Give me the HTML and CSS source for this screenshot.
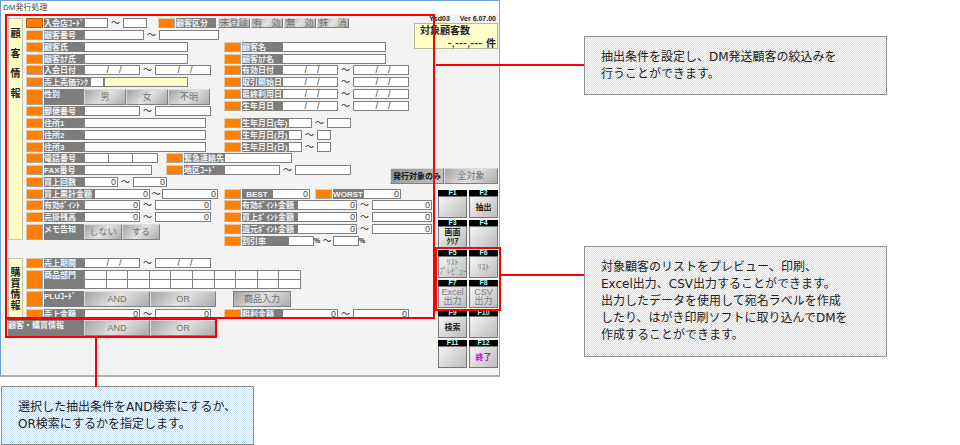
FILE: index.html
```html
<!DOCTYPE html>
<html lang="ja">
<head>
    <meta charset="UTF-8">
    <meta name="viewport" content="width=device-width, initial-scale=1.0">
    <title>DM発行処理</title>
    <link rel="stylesheet" href="styles.css">
</head>
<body>
<div class="page">
    <div class="col-main">
        <div class="window">
            <div class="titlebar">DM発行処理</div>
            <div class="window-body">
                <form class="form">
                    <div class="extract">

                        <!-- 顧客情報 -->
                        <section class="section">
                            <h2 class="side side-customer">顧客情報</h2>
                            <div class="fields">
                                <div class="group">
                                    <div class="row">
                                        <div class="field lead-s"><button type="button" class="mark focus"></button><label class="tag" for="shop1">入会店ｺｰﾄﾞ</label><input class="w24" id="shop1"><span class="tilde">～</span><input class="w24"></div>
                                        <div class="field"><button type="button" class="mark"></button><span class="tag">顧客区分</span><div class="btns kubun"><button type="button" class="btn">未登録</button><button type="button" class="btn">有　効</button><button type="button" class="btn">無　効</button><button type="button" class="btn">抹　消</button></div></div>
                                    </div>
                                    <div class="row"><button type="button" class="mark"></button><label class="tag" for="no1">顧客番号</label><input class="w60" id="no1"><span class="tilde">～</span><input class="w60"></div>
                                </div>

                                <div class="split">
                                    <div class="stack">
                                        <div class="group">
                                            <div class="row"><button type="button" class="mark"></button><label class="tag" for="sei">顧客氏</label><input class="w104" id="sei"></div>
                                            <div class="row"><button type="button" class="mark"></button><label class="tag" for="seikana">顧客ｶﾅ氏</label><input class="w104" id="seikana"></div>
                                        </div>
                                        <div class="group">
                                            <div class="row"><button type="button" class="mark"></button><label class="tag" for="join">入会日付</label><input class="w56 date" id="join" value="/    /"><span class="tilde">～</span><input class="w56 date" value="/    /"></div>
                                            <div class="row"><button type="button" class="mark"></button><label class="tag tag-m" for="rank">売上売価ﾗﾝｸ</label><input class="w14" id="rank"><input class="w84 rank-name" readonly></div>
                                            <div class="row tall"><button type="button" class="mark"></button><span class="tag">性別</span><div class="btns"><button type="button" class="btn w42">男</button><button type="button" class="btn w42">女</button><button type="button" class="btn w42">不明</button></div></div>
                                        </div>
                                        <div class="group">
                                            <div class="row"><button type="button" class="mark"></button><label class="tag" for="zip">郵便番号</label><input class="w56" id="zip"><span class="tilde">～</span><input class="w56"></div>
                                            <div class="row"><button type="button" class="mark"></button><label class="tag" for="addr1">住所1</label><input class="w122" id="addr1"></div>
                                            <div class="row"><button type="button" class="mark"></button><label class="tag" for="addr2">住所2</label><input class="w122" id="addr2"></div>
                                            <div class="row"><button type="button" class="mark"></button><label class="tag" for="addr3">住所3</label><input class="w122" id="addr3"></div>
                                        </div>
                                    </div>
                                    <div class="stack">
                                        <div class="group">
                                            <div class="row"><button type="button" class="mark"></button><label class="tag" for="mei">顧客名</label><input class="w104" id="mei"></div>
                                            <div class="row"><button type="button" class="mark"></button><label class="tag" for="meikana">顧客ｶﾅ名</label><input class="w104" id="meikana"></div>
                                        </div>
                                        <div class="group">
                                            <div class="row"><button type="button" class="mark"></button><label class="tag" for="valid">有効日付</label><input class="w56 date" id="valid" value="/    /"><span class="tilde">～</span><input class="w56 date" value="/    /"></div>
                                            <div class="row"><button type="button" class="mark"></button><label class="tag" for="start">取引開始日</label><input class="w56 date" id="start" value="/    /"><span class="tilde">～</span><input class="w56 date" value="/    /"></div>
                                            <div class="row"><button type="button" class="mark"></button><label class="tag" for="last">最終利用日</label><input class="w56 date" id="last" value="/    /"><span class="tilde">～</span><input class="w56 date" value="/    /"></div>
                                            <div class="row"><button type="button" class="mark"></button><label class="tag" for="birth">生年月日</label><input class="w56 date" id="birth" value="/    /"><span class="tilde">～</span><input class="w56 date" value="/    /"></div>
                                        </div>
                                        <div class="group birth-parts">
                                            <div class="row"><button type="button" class="mark"></button><label class="tag tag-m" for="by">生年月日(年)</label><input class="w24" id="by"><span class="tilde">～</span><input class="w24"></div>
                                            <div class="row"><button type="button" class="mark"></button><label class="tag tag-m" for="bm">生年月日(月)</label><input class="w14" id="bm"><span class="tilde">～</span><input class="w14"></div>
                                            <div class="row"><button type="button" class="mark"></button><label class="tag tag-m" for="bd">生年月日(日)</label><input class="w14" id="bd"><span class="tilde">～</span><input class="w14"></div>
                                        </div>
                                    </div>
                                </div>

                                <div class="group">
                                    <div class="row">
                                        <div class="field lead-l"><button type="button" class="mark"></button><label class="tag" for="tel">電話番号</label><input class="w24 join" id="tel"><input class="w24 join"><input class="w26"></div>
                                        <div class="field"><button type="button" class="mark"></button><label class="tag" for="emg">緊急連絡先</label><input class="w68" id="emg"></div>
                                    </div>
                                    <div class="row">
                                        <div class="field lead-l"><button type="button" class="mark"></button><label class="tag" for="fax">FAX番号</label><input class="w68" id="fax"></div>
                                        <div class="field"><button type="button" class="mark"></button><label class="tag" for="area">地区ｺｰﾄﾞ</label><input class="w56" id="area"><span class="tilde">～</span><input class="w56"></div>
                                    </div>
                                </div>

                                <div class="split">
                                    <div class="stack">
                                        <div class="group">
                                            <div class="row"><button type="button" class="mark"></button><label class="tag" for="cnt">買上回数</label><input class="w34 num" id="cnt" value="0"><span class="tilde">～</span><input class="w34 num" value="0"></div>
                                            <div class="row"><button type="button" class="mark"></button><label class="tag tag-l" for="total">買上累計金額</label><input class="w56 num" id="total" value="0"><span class="tilde slim">～</span><input class="w56 num" value="0"></div>
                                        </div>
                                        <div class="group">
                                            <div class="row"><button type="button" class="mark"></button><label class="tag" for="pt">有効ﾎﾟｲﾝﾄ</label><input class="w56 num" id="pt" value="0"><span class="tilde">～</span><input class="w56 num" value="0"></div>
                                            <div class="row"><button type="button" class="mark"></button><label class="tag" for="rest">売掛残高</label><input class="w56 num" id="rest" value="0"><span class="tilde">～</span><input class="w56 num" value="0"></div>
                                            <div class="row tall"><button type="button" class="mark"></button><span class="tag">メモ告知</span><div class="btns"><button type="button" class="btn w38">しない</button><button type="button" class="btn w38">する</button></div></div>
                                        </div>
                                    </div>
                                    <div class="stack after-count">
                                        <div class="row">
                                            <div class="field lead-best"><button type="button" class="mark"></button><label class="tag tag-s" for="best">BEST</label><input class="w38 num" id="best" value="0"></div>
                                            <div class="field"><button type="button" class="mark"></button><label class="tag tag-s" for="worst">WORST</label><input class="w38 num" id="worst" value="0"></div>
                                        </div>
                                        <div class="group">
                                            <div class="row"><button type="button" class="mark"></button><label class="tag tag-xl" for="pt1">有効ﾎﾟｲﾝﾄ金額</label><input class="w60 num" id="pt1" value="0"><span class="tilde">～</span><input class="w60 num" value="0"></div>
                                            <div class="row"><button type="button" class="mark"></button><label class="tag tag-xl" for="pt2">買上ﾎﾟｲﾝﾄ金額</label><input class="w60 num" id="pt2" value="0"><span class="tilde">～</span><input class="w60 num" value="0"></div>
                                            <div class="row"><button type="button" class="mark"></button><label class="tag tag-xl" for="pt3">還元ﾎﾟｲﾝﾄ金額</label><input class="w60 num" id="pt3" value="0"><span class="tilde">～</span><input class="w60 num" value="0"></div>
                                            <div class="row"><button type="button" class="mark"></button><label class="tag tag-m" for="off">割引率</label><input class="w26" id="off"><span class="pct">%</span><span class="tilde slim">～</span><input class="w26"><span class="pct">%</span></div>
                                        </div>
                                    </div>
                                </div>
                            </div>
                        </section>

                        <!-- 購買情報 -->
                        <section class="section">
                            <h2 class="side side-purchase">購買情報</h2>
                            <div class="fields">
                                <div class="group">
                                    <div class="row"><button type="button" class="mark"></button><label class="tag" for="term">売上期間</label><input class="w56 date" id="term" value="/    /"><span class="tilde">～</span><input class="w56 date" value="/    /"></div>
                                    <div class="row dept">
                                        <button type="button" class="mark"></button><span class="tag">商品部門</span>
                                        <table class="dept-table">
                                            <tr><td></td><td></td><td></td><td></td><td></td><td></td><td></td><td></td><td></td><td></td></tr>
                                            <tr><td></td><td></td><td></td><td></td><td></td><td></td><td></td><td></td><td></td><td></td></tr>
                                        </table>
                                    </div>
                                    <div class="row tall"><button type="button" class="mark"></button><span class="tag">PLUｺｰﾄﾞ</span><div class="btns"><button type="button" class="btn w66">AND</button><button type="button" class="btn w66">OR</button></div><button type="button" class="btn goods">商品入力</button></div>
                                    <div class="row split">
                                        <div class="field"><button type="button" class="mark"></button><label class="tag" for="sales">売上金額</label><input class="w56 num" id="sales" value="0"><span class="tilde">～</span><input class="w56 num" value="0"></div>
                                        <div class="field"><button type="button" class="mark"></button><label class="tag" for="gross">粗利金額</label><input class="w56 num" id="gross" value="0"><span class="tilde">～</span><input class="w56 num" value="0"></div>
                                    </div>
                                </div>
                            </div>
                        </section>
                    </div>

                    <div class="combine">
                        <span class="tag tag-wide">顧客・購買情報</span>
                        <div class="btns"><button type="button" class="btn w66">AND</button><button type="button" class="btn w66">OR</button></div>
                    </div>
                </form>

                <aside class="tools">
                    <div class="version"><span>Ysd03</span><span>Ver 6.07.00</span></div>
                    <div class="count">
                        <span>対象顧客数</span>
                        <span class="count-value"><span class="dashes">-,---,---</span> 件</span>
                    </div>
                    <div class="target"><button type="button" class="btn on">発行対象のみ</button><button type="button" class="btn">全対象</button></div>

                    <div class="keys">
                        <div class="key"><span>F1</span><button type="button"></button></div>
                        <div class="key"><span>F2</span><button type="button">抽出</button></div>
                        <div class="key"><span>F3</span><button type="button">画面<br>ｸﾘｱ</button></div>
                        <div class="key"><span>F4</span><button type="button"></button></div>
                    </div>
                    <div class="keys output">
                        <div class="key"><span>F5</span><button type="button" class="off">ﾘｽﾄ<br>ﾌﾟﾚﾋﾞｭｰ</button></div>
                        <div class="key"><span>F6</span><button type="button" class="off">ﾘｽﾄ</button></div>
                        <div class="key"><span>F7</span><button type="button" class="off latin">Excel<br>出力</button></div>
                        <div class="key"><span>F8</span><button type="button" class="off latin">CSV<br>出力</button></div>
                    </div>
                    <div class="keys">
                        <div class="key"><span>F9</span><button type="button">検索</button></div>
                        <div class="key"><span>F10</span><button type="button"></button></div>
                        <div class="key"><span>F11</span><button type="button"></button></div>
                        <div class="key"><span>F12</span><button type="button" class="quit">終了</button></div>
                    </div>
                </aside>
            </div>
        </div>

        <p class="callout callout-combine">選択した抽出条件をAND検索にするか、<br>OR検索にするかを指定します。</p>
    </div>

    <div class="col-notes">
        <p class="callout callout-extract">抽出条件を設定し、DM発送顧客の絞込みを<br>行うことができます。</p>
        <p class="callout callout-output">対象顧客のリストをプレビュー、印刷、<br>Excel出力、CSV出力することができます。<br>出力したデータを使用して宛名ラベルを作成<br>したり、はがき印刷ソフトに取り込んでDMを<br>作成することができます。</p>
    </div>
</div>
</body>
</html>
```

FILE: styles.css
```css
* {
    box-sizing: border-box;
}
body {
    margin: 0;
    background: #fff;
    font-family: "Liberation Sans", "Noto Sans CJK JP", sans-serif;
    color: #222;
}
button, input {
    margin: 0;
    padding: 0;
    font-family: inherit;
    border-radius: 0;
}
.page {
    display: grid;
    grid-template-columns: 500px minmax(0, 1fr);
    align-items: start;
}

/* ウィンドウ */
.window {
    border: 1px solid #6f9fd0;
    border-right-color: #a5a5a5;
    border-bottom: 2px solid #b0b0b0;
    background: #f3f3f3;
}
.titlebar {
    height: 13px;
    padding-left: 2px;
    background: #fff;
    color: #444;
    font-size: 8px;
    line-height: 13px;
}
.window-body {
    display: flex;
    justify-content: space-between;
    padding-bottom: 5px;
}
.form {
    flex: 1;
    padding-left: 4px;
}
.extract {
    position: relative;
    padding: 4px 0 0 3px;
}
.extract::after,
.combine::after,
.output::after {
    content: "";
    position: absolute;
    inset: 0;
    border: 2px solid #f00;
    pointer-events: none;
    z-index: 2;
}

/* 条件入力 */
.section {
    display: flex;
    align-items: stretch;
    gap: 2px;
}
.section + .section {
    margin-top: 12px;
}
.side {
    width: 15px;
    margin: 0;
    border: 1px solid #c4c4b4;
    background: #ffffc8;
    color: #222;
    font-size: 10px;
    text-align: center;
    word-break: break-all;
}
.side-customer {
    margin-bottom: 6px;
    padding-top: 5px;
    line-height: 20px;
}
.side-purchase {
    padding-top: 8px;
    line-height: 11px;
}
.fields {
    padding-left: 1px;
}
.group, .stack {
    display: flex;
    flex-direction: column;
    gap: 2px;
}
.stack {
    gap: 1px;
}
.split {
    display: grid;
    grid-template-columns: 198px 1fr;
}
.group + .split {
    margin-top: 2px;
}
.split + .group {
    margin-top: 1px;
}
.birth-parts {
    margin-top: 6px;
}
.after-count {
    padding-top: 12px;
}
.row, .field {
    display: flex;
    height: 10px;
    white-space: nowrap;
}
.row.split {
    display: grid;
}
.lead-s {
    width: 132px;
}
.lead-l {
    width: 140px;
}
.lead-best {
    width: 91px;
}
.row.tall {
    height: 16px;
}
.row.dept {
    height: 19px;
}
.mark {
    flex: none;
    width: 17px;
    margin-right: 1px;
    border: 1px solid #d0a070;
    border-color: #e8c8a0 #a8a8a8 #a8a8a8 #e8c8a0;
    background: #ff8000;
}
.mark.focus {
    border-color: #b85c00;
}
.tag {
    flex: none;
    width: 40px;
    background: #7d7d7d;
    color: #f4f4f4;
    font-family: "Liberation Sans", "Noto Sans CJK JP", sans-serif;
    font-size: 8px;
    font-weight: bold;
    line-height: 11px;
}
.tag-s {
    width: 30px;
    text-align: center;
}
.tag-m {
    width: 46px;
}
.tag-l {
    width: 50px;
}
.tag-xl {
    width: 55px;
}
.tag-wide {
    width: 76px;
}
input {
    flex: none;
    height: 10px;
    border: 1px solid #808080;
    background: #fff;
    color: #444;
    font-size: 9px;
    line-height: 8px;
}
.w14 { width: 14px; }
.w24 { width: 24px; }
.w26 { width: 26px; }
.w34 { width: 34px; }
.w38 { width: 38px; }
.w42 { width: 42px; }
.w56 { width: 56px; }
.w60 { width: 60px; }
.w66 { width: 66px; }
.w68 { width: 68px; }
.w84 { width: 84px; }
.w104 { width: 104px; }
.w122 { width: 122px; }
.join {
    border-right: 0;
}
.date {
    padding-left: 4px;
    text-align: center;
    white-space: pre;
}
.num {
    padding-right: 1px;
    text-align: right;
}
.rank-name {
    background: #ffffc8;
}
.tilde {
    width: 15px;
    font-size: 9px;
    line-height: 10px;
    text-align: center;
}
.tilde.slim {
    width: 12px;
}
.pct {
    width: 7px;
    font-size: 7px;
    font-weight: bold;
    line-height: 10px;
}
.btns {
    display: flex;
}
.btn {
    border: 1px solid #8c8c8c;
    border-color: #dcdcdc #808080 #808080 #dcdcdc;
    background: linear-gradient(135deg, #a2a2a2, #e2e2e2 50%, #acacac);
    color: #707070;
    font-size: 9px;
    line-height: 9px;
    white-space: nowrap;
}
.kubun {
    gap: 1px;
    padding-left: 2px;
}
.kubun .btn {
    width: 32px;
    line-height: 8px;
}
.goods {
    width: 58px;
    margin-left: 17px;
    border-color: #808080;
}
.dept-table {
    width: 217px;
    border-collapse: collapse;
    table-layout: fixed;
    background: #fff;
}
.dept-table td {
    padding: 0;
    border: 1px solid #808080;
}
.combine {
    position: relative;
    display: flex;
    width: 212px;
    height: 20px;
    margin-top: -1px;
    padding: 2px 3px;
}

/* 右側の操作エリア */
.tools {
    display: flex;
    flex-direction: column;
    align-items: flex-end;
    width: 64px;
    padding-right: 1px;
}
.version {
    display: flex;
    gap: 10px;
    height: 9px;
    padding-right: 2px;
    font-size: 7px;
    font-weight: bold;
    line-height: 9px;
    white-space: nowrap;
}
.count {
    display: flex;
    flex-direction: column;
    width: 84px;
    height: 26px;
    padding: 1px 1px 0 5px;
    border: 1px solid #b8b8a0;
    background: #ffffc8;
    font-size: 10px;
    font-weight: bold;
    line-height: 12px;
    white-space: nowrap;
}
.count-value {
    text-align: right;
}
.dashes {
    padding-right: 1px;
    font-size: 12px;
    font-weight: normal;
}
.target {
    display: flex;
    height: 16px;
    margin: 119px 0 6px;
}
.target .btn {
    width: 54px;
}
.target .on {
    background: linear-gradient(135deg, #8e8e8e, #c8c8c8);
    color: #111;
    font-size: 8px;
    font-weight: bold;
}
.keys {
    position: relative;
    display: grid;
    grid-template-columns: 29px 29px;
    gap: 2px;
    margin-bottom: 2px;
}
.key {
    display: flex;
    flex-direction: column;
    height: 28px;
}
.key span {
    height: 6px;
    background: #000;
    color: #bff;
    font-size: 7px;
    font-weight: bold;
    line-height: 6px;
    text-align: center;
}
.key button {
    flex: 1;
    border: 1px solid #777;
    background: linear-gradient(135deg, #f4f4f4, #bcbcbc);
    color: #222;
    font-size: 8px;
    font-weight: bold;
    line-height: 9px;
    white-space: nowrap;
}
.key .off {
    color: #7d7d7d;
    font-weight: normal;
}
.key .latin {
    font-size: 9px;
}
.key .quit {
    color: #c010c0;
}
.output::after {
    inset: -3px;
}

/* 説明の吹き出し */
.callout {
    position: relative;
    margin: 0;
    padding: 12px 16px 11px;
    border: 1px solid #909090;
    background: repeating-conic-gradient(#c9dff0 0 25%, #fff 0 50%) 0 0 / 2px 2px;
    color: #222;
    font-family: "DejaVu Sans", "Noto Sans CJK JP", sans-serif;
    font-size: 12px;
    line-height: 17px;
}
.callout::before {
    content: "";
    position: absolute;
    background: #f00;
    z-index: 2;
}
.col-notes {
    padding: 36px 0 0 84px;
}
.col-notes .callout {
    max-width: 303px;
}
.col-notes .callout::before {
    top: 27px;
    height: 2px;
}
.callout-extract {
    min-height: 59px;
}
.callout-extract::before {
    left: -149px;
    width: 148px;
}
.callout-output {
    min-height: 111px;
    margin-top: 151px;
}
.callout-output::before {
    left: -85px;
    width: 84px;
}
.callout-combine {
    max-width: 253px;
    min-height: 59px;
    margin: 9px 0 0 1px;
}
.callout-combine::before {
    left: 93px;
    bottom: 100%;
    width: 2px;
    height: 49px;
}
```
